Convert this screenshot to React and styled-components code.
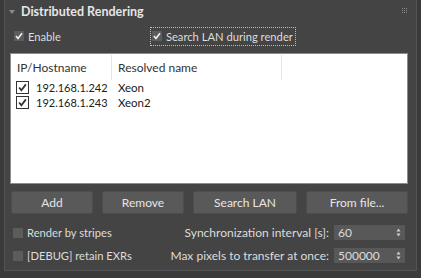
import styled, { createGlobalStyle } from "styled-components";

const Global = createGlobalStyle`
  html, body {
    margin: 0;
    padding: 0;
    background: #3a3a3a;
  }
  body {
    font-family: Lato, "Liberation Sans", sans-serif;
    font-size: 12px;
    color: #dcdcdc;
  }
`;

const Panel = styled.section`
  box-sizing: border-box;
  width: 413px;
  height: 271px;
  margin: 0 0 0 4px;
  background: #444444;
  border: 1px solid #535353;
  border-top: none;
  padding: 0 7px 0 7px;
  display: flex;
  flex-direction: column;
`;

const Header = styled.div`
  height: 22px;
  display: flex;
  align-items: center;
  margin-left: -3px;

  .arrow {
    width: 0;
    height: 0;
    border-left: 3px solid transparent;
    border-right: 3px solid transparent;
    border-top: 4px solid #8a8a8a;
    margin-right: 6px;
    margin-top: 1px;
  }

  h2 {
    margin: 0;
    font-size: 12.5px;
    font-weight: bold;
    color: #e6e6e6;
    flex: 1;
  }
`;

const Grip = styled.div`
  display: grid;
  grid-template-columns: repeat(3, 1px);
  gap: 1px;
  margin-right: 2px;
  margin-top: -2px;

  span {
    width: 1px;
    height: 1px;
    background: #8a8a8a;
  }
`;

const OptionRow = styled.div`
  height: 24px;
  margin-top: 2px;
  display: flex;
  align-items: center;
`;

const Check = styled.label`
  display: flex;
  align-items: center;
  gap: 4px;
  padding: 2px 2px 2px 1px;
  border: 1px dotted ${(p) => (p.$focus ? "#bdbdbd" : "transparent")};
  margin-left: ${(p) => p.$offset || 0}px;
  white-space: nowrap;
  font-size: 11.2px;
`;

const DarkBox = styled.span`
  box-sizing: border-box;
  width: 10px;
  height: 10px;
  background: #5c5c5c;
  display: flex;
  align-items: center;
  justify-content: center;
`;

const CheckMark = ({ color = "#f0f0f0", size = 8 }) => (
  <svg width={size} height={size} viewBox="0 0 8 8">
    <path d="M1 4 L3 6.5 L7 1.2" fill="none" stroke={color} strokeWidth="1.6" />
  </svg>
);

const List = styled.div`
  box-sizing: border-box;
  height: 131px;
  margin: 5px 1px 0 -2px;
  background: #ffffff;
  border: 1px solid #8c8c8c;
  color: #202020;
`;

const ListHead = styled.div`
  display: grid;
  grid-template-columns: 101px 170px 1fr;
  height: 25px;
  margin-top: 1px;

  div {
    display: flex;
    align-items: center;
    padding-left: 6px;
    border-right: 1px solid #e5e5e5;
    color: #333;
  }
  div:last-child {
    border-right: none;
  }
`;

const ListRow = styled.div`
  display: grid;
  grid-template-columns: 101px 1fr;
  height: 15px;
  align-items: center;
  font-size: 11.5px;

  .ip {
    display: flex;
    align-items: center;
    gap: 7px;
    padding-left: 5px;
    white-space: nowrap;
    font-size: 11px;
  }
  .name {
    padding-left: 6px;
  }
`;

const WhiteBox = styled.span`
  box-sizing: border-box;
  width: 13px;
  height: 13px;
  border: 1px solid #333;
  background: #fff;
  display: flex;
  align-items: center;
  justify-content: center;
`;

const Buttons = styled.div`
  display: grid;
  grid-template-columns: 82px 82px 104px 1fr;
  gap: 9px;
  margin: 7px 1px 0 -1px;
`;

const Button = styled.button`
  height: 23px;
  background: #595959;
  border: 1px solid #4d4d4d;
  border-radius: 2px;
  color: #e6e6e6;
  font-family: inherit;
  font-size: 12px;
  padding: 0;
`;

const SettingRow = styled.div`
  display: flex;
  align-items: center;
  height: 17px;
  margin-top: ${(p) => p.$top}px;
  margin-left: -1px;
`;

const Label = styled.span`
  margin-left: auto;
  margin-right: 5px;
  white-space: nowrap;
`;

const Spinner = styled.div`
  box-sizing: border-box;
  width: 71px;
  height: 15px;
  background: #585858;
  display: flex;
  align-items: center;
  justify-content: space-between;
  padding: 0 4px 0 4px;
  margin-right: 4px;
  font-size: 12px;
`;

const Arrows = () => (
  <svg width="5" height="9" viewBox="0 0 5 9">
    <path d="M2.5 0.5 L4.5 3.5 L0.5 3.5 Z" fill="#cfcfcf" />
    <path d="M2.5 8.5 L4.5 5.5 L0.5 5.5 Z" fill="#cfcfcf" />
  </svg>
);

export default function App() {
  const hosts = [
    { ip: "192.168.1.242", name: "Xeon" },
    { ip: "192.168.1.243", name: "Xeon2" },
  ];

  return (
    <>
      <Global />
      <Panel>
        <Header>
          <span className="arrow" />
          <h2>Distributed Rendering</h2>
          <Grip>
            {Array.from({ length: 9 }).map((_, i) => (
              <span key={i} />
            ))}
          </Grip>
        </Header>

        <OptionRow>
          <Check>
            <DarkBox>
              <CheckMark />
            </DarkBox>
            Enable
          </Check>
          <Check $focus $offset={86}>
            <DarkBox>
              <CheckMark />
            </DarkBox>
            Search LAN during render
          </Check>
        </OptionRow>

        <List>
          <ListHead>
            <div>IP/Hostname</div>
            <div>Resolved name</div>
            <div />
          </ListHead>
          {hosts.map((h) => (
            <ListRow key={h.ip}>
              <div className="ip">
                <WhiteBox>
                  <CheckMark color="#333" size={9} />
                </WhiteBox>
                {h.ip}
              </div>
              <div className="name">{h.name}</div>
            </ListRow>
          ))}
        </List>

        <Buttons>
          <Button>Add</Button>
          <Button>Remove</Button>
          <Button>Search LAN</Button>
          <Button>From file...</Button>
        </Buttons>

        <SettingRow $top={10}>
          <Check>
            <DarkBox />
            Render by stripes
          </Check>
          <Label>Synchronization interval [s]:</Label>
          <Spinner>
            60
            <Arrows />
          </Spinner>
        </SettingRow>

        <SettingRow $top={6}>
          <Check>
            <DarkBox />
            [DEBUG] retain EXRs
          </Check>
          <Label>Max pixels to transfer at once:</Label>
          <Spinner>
            500000
            <Arrows />
          </Spinner>
        </SettingRow>
      </Panel>
    </>
  );
}
